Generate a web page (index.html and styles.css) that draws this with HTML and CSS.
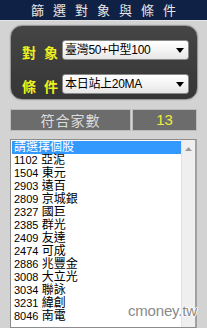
FILE: index.html
```html
<!DOCTYPE html>
<html>
<head>
<meta charset="utf-8">
<link rel="stylesheet" href="styles.css">
</head>
<body>
<div class="page">
  <div class="header">篩選對象與條件</div>
  <div class="panel">
    <div class="row">
      <div class="label">對象</div>
      <div class="select"><span class="sel-text">臺灣50+中型100</span><svg class="arrow" width="8" height="5" viewBox="0 0 8 5"><path d="M0 0H8L4 5Z" fill="#000"/></svg></div>
    </div>
    <div class="row">
      <div class="label">條件</div>
      <div class="select"><span class="sel-text">本日站上20MA</span><svg class="arrow" width="8" height="5" viewBox="0 0 8 5"><path d="M0 0H8L4 5Z" fill="#000"/></svg></div>
    </div>
  </div>
  <div class="count">
    <div class="count-label">符合家數</div>
    <div class="count-value">13</div>
  </div>
  <div class="listbox">
    <div class="items">
      <div class="item selected">請選擇個股</div>
      <div class="item"><span class="code">1102</span> 亞泥</div>
      <div class="item"><span class="code">1504</span> 東元</div>
      <div class="item"><span class="code">2903</span> 遠百</div>
      <div class="item"><span class="code">2809</span> 京城銀</div>
      <div class="item"><span class="code">2327</span> 國巨</div>
      <div class="item"><span class="code">2385</span> 群光</div>
      <div class="item"><span class="code">2409</span> 友達</div>
      <div class="item"><span class="code">2474</span> 可成</div>
      <div class="item"><span class="code">2886</span> 兆豐金</div>
      <div class="item"><span class="code">3008</span> 大立光</div>
      <div class="item"><span class="code">3034</span> 聯詠</div>
      <div class="item"><span class="code">3231</span> 緯創</div>
      <div class="item"><span class="code">8046</span> 南電</div>
    </div>
    <div class="scrollbar">
      <svg class="up" width="7" height="4" viewBox="0 0 7 4"><path d="M0 4L3.5 0L7 4Z" fill="#9a9a9a"/></svg>
    </div>
  </div>
  <div class="watermark">cmoney.tw</div>
</div>
</body>
</html>
```
FILE: styles.css
```css
html, body {
  margin: 0;
  padding: 0;
}
body {
  width: 207px;
  height: 328px;
  overflow: hidden;
  background: #d3d3d3;
  font-family: "Liberation Sans", "Noto Sans CJK TC", sans-serif;
}
.page {
  position: relative;
  width: 207px;
  height: 328px;
  overflow: hidden;
  display: flex;
  flex-direction: column;
}
.header {
  height: 20px;
  line-height: 20px;
  background: #0f2246;
  border-bottom: 1px solid #e4e4e4;
  color: #e8e8e8;
  font-family: "Noto Sans CJK TC", sans-serif;
  font-size: 13px;
  letter-spacing: 9px;
  padding-left: 9px;
  text-align: center;
}
.panel {
  margin: 4px 9px 0 10px;
  height: 76px;
  border-radius: 12px;
  background: linear-gradient(#454545, #363636);
  border: 1px solid #9a9a9a;
  box-shadow: 0 0 0 1px #c8c8c8;
  padding: 12px 8px 0 11px;
  display: flex;
  flex-direction: column;
  gap: 10px;
  box-sizing: border-box;
  height: 79px;
}
.row {
  display: flex;
  align-items: center;
  gap: 3px;
}
.label {
  width: 37px;
  color: #f0f01e;
  font-family: "Noto Sans CJK TC", sans-serif;
  font-weight: bold;
  font-size: 14px;
  letter-spacing: 8px;
  line-height: 20px;
  white-space: nowrap;
  padding-top: 4px;
}
.select {
  width: 127px;
  height: 20px;
  box-sizing: border-box;
  background: linear-gradient(#ffffff, #f4f4f4 50%, #e6e6e6);
  border: 1px solid #8a8a8a;
  border-radius: 3px;
  display: flex;
  align-items: center;
  justify-content: space-between;
  padding: 0 4px 0 2px;
}
.sel-text {
  font-size: 12px;
  color: #000;
  line-height: 18px;
  letter-spacing: -0.3px;
}
.arrow {
  display: block;
}
.count {
  margin: 9px 10px 0 10px;
  height: 22px;
  display: flex;
  gap: 1px;
}
.count-label {
  width: 121px;
  box-sizing: border-box;
  background: #6c6c6c;
  border: 1px solid #bdbdbd;
  color: #dcdcdc;
  font-family: "Noto Sans CJK TC", sans-serif;
  font-size: 14px;
  line-height: 20px;
  text-align: center;
  letter-spacing: 1px;
}
.count-value {
  flex: 1;
  box-sizing: border-box;
  background: #6c6c6c;
  border: 1px solid #bdbdbd;
  color: #ecec3a;
  font-size: 15px;
  line-height: 20px;
  text-align: center;
}
.listbox {
  margin: 8px 10px 0 10px;
  height: 200px;
  box-sizing: border-box;
  background: #fff;
  border: 1px solid #8c8c8c;
  border-right: 2px solid #a0a0a0;
  display: flex;
}
.items {
  flex: 1;
  padding: 1px 0 0 1px;
}
.item {
  height: 13px;
  line-height: 13px;
  font-size: 12px;
  color: #000;
  padding-left: 2px;
  white-space: nowrap;
}
.item.selected {
  background: #3399ff;
  color: #fff;
}
.code {
  font-size: 11px;
}
.scrollbar {
  width: 13px;
  background: #efefef;
  border-left: 1px solid #e2e2e2;
  display: flex;
  justify-content: center;
  padding-top: 7px;
  align-items: flex-start;
}
.up {
  display: block;
}
.watermark {
  position: absolute;
  left: 128px;
  top: 302px;
  font-size: 15px;
  color: #8a8a8a;
  font-family: "Liberation Sans", sans-serif;
  text-shadow: 1px 0 0 #fff, -1px 0 0 #fff, 0 1px 0 #fff, 0 -1px 0 #fff;
  letter-spacing: -0.2px;
}
```
